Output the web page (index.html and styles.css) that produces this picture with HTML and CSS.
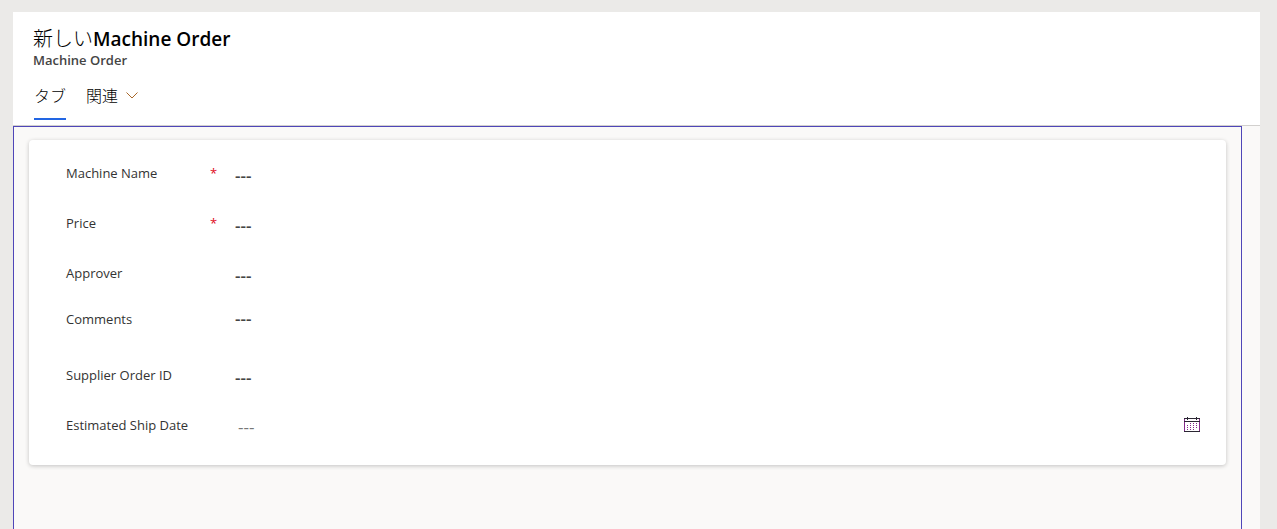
FILE: index.html
```
<!DOCTYPE html>
<html lang="ja">

<head>
    <meta charset="UTF-8">
    <meta name="viewport" content="width=device-width, initial-scale=1.0">
    <title>Machine Order</title>
    <link rel="stylesheet" href="styles.css">
</head>

<body>
    <main class="page">
        <header class="page-header">
            <h1 class="title"><span class="title-new">新しい</span>Machine Order</h1>
            <p class="entity">Machine Order</p>
            <nav class="tabs">
                <button type="button" class="tab active">タブ</button>
                <button type="button" class="tab">関連
                    <svg class="chevron" viewBox="0 0 12 8" width="12" height="8">
                        <path d="M0.5 1.5L6 7L11.5 1.5" />
                    </svg>
                </button>
            </nav>
        </header>

        <div class="frame">
            <form class="card">
                <div class="row">
                    <label for="machine-name">Machine Name</label>
                    <span class="required">*</span>
                    <input type="text" id="machine-name" placeholder="---" required>
                </div>
                <div class="row">
                    <label for="price">Price</label>
                    <span class="required">*</span>
                    <input type="text" id="price" placeholder="---" required>
                </div>
                <div class="row">
                    <label for="approver">Approver</label>
                    <input type="text" id="approver" placeholder="---">
                </div>
                <div class="row comments">
                    <label for="comments">Comments</label>
                    <textarea id="comments" rows="1" placeholder="---"></textarea>
                </div>
                <div class="row">
                    <label for="supplier-order-id">Supplier Order ID</label>
                    <input type="text" id="supplier-order-id" placeholder="---">
                </div>
                <div class="row date">
                    <label for="ship-date">Estimated Ship Date</label>
                    <input type="text" id="ship-date" placeholder="---">
                    <button type="button" class="calendar" aria-label="Estimated Ship Date">
                        <svg viewBox="0 0 16 16" width="16" height="16" shape-rendering="crispEdges">
                            <path class="side" d="M0 2h1v12H0zM15 2h1v12h-1z" />
                            <path class="line" d="M0 1h16v1H0zM0 4h16v1H0zM0 14h16v1H0zM3 0h1v3H3zM12 0h1v3h-1z" />
                            <path class="dots" d="M6 6h1v1H6zM9 6h1v1H9zM12 6h1v1h-1zM3 8h1v1H3zM6 8h1v1H6zM9 8h1v1H9zM12 8h1v1h-1zM3 10h1v1H3zM6 10h1v1H6zM9 10h1v1H9zM12 10h1v1h-1zM3 12h1v1H3zM6 12h1v1H6zM9 12h1v1H9z" />
                        </svg>
                    </button>
                </div>
            </form>
        </div>
    </main>
</body>

</html>
```
FILE: styles.css
```
* {
    box-sizing: border-box;
}

body {
    margin: 0;
    padding: 12px 17px 0 13px;
    min-height: 100vh;
    display: flex;
    flex-direction: column;
    background-color: #ebeae8;
    color: #333;
    font-family: "Segoe UI", "Open Sans", "Noto Sans CJK JP", sans-serif;
    font-size: 13px;
    line-height: 20px;
}

.page {
    flex: 1;
    display: flex;
    flex-direction: column;
    background-color: #faf9f8;
}

.page-header {
    padding: 14px 20px 5px;
    background-color: #fff;
    border-bottom: 1px solid #d2d0ce;
}

.title {
    margin: 0;
    color: #000;
    font-size: 19px;
    font-weight: 600;
    line-height: 26px;
}

.title-new {
    font-size: 20px;
    font-weight: 300;
}

.entity {
    margin: 0;
    color: #444;
    font-size: 13px;
    font-weight: 600;
    line-height: 16px;
}

.tabs {
    display: flex;
    gap: 20px;
    margin-top: 12px;
    padding-left: 1px;
}

.tab {
    display: flex;
    align-items: center;
    gap: 8px;
    height: 40px;
    padding: 0 0 8px;
    border: none;
    border-bottom: 2px solid transparent;
    background: none;
    color: #000;
    font-family: inherit;
    font-size: 16px;
    font-weight: 300;
    cursor: pointer;
}

.tab.active {
    border-bottom-color: #2266e3;
}

.chevron {
    fill: none;
    stroke: #a8682a;
}

.frame {
    flex: 1;
    margin-right: 18px;
    padding: 13px 15px;
    border: 1px solid #4f46b8;
    border-bottom: none;
}

.card {
    padding: 8px 24px 15px 37px;
    background-color: #fff;
    border-radius: 4px;
    box-shadow: 0 1px 4px rgba(0, 0, 0, 0.22);
}

.row {
    display: grid;
    grid-template-columns: 144px 25px 1fr auto;
    align-items: start;
    height: 50px;
    padding-top: 15px;
}

.row.comments {
    height: 52px;
    padding-top: 11px;
}

.required {
    color: #e00b1c;
}

input,
textarea {
    grid-column: 3;
    width: 100%;
    height: 24px;
    padding: 0;
    border: none;
    outline: none;
    resize: none;
    overflow: hidden;
    background: none;
    color: #333;
    font-family: inherit;
    font-size: 17px;
    font-weight: 600;
    line-height: 20px;
}

input::placeholder,
textarea::placeholder {
    color: #444;
    opacity: 1;
}

.date input {
    height: 22px;
    padding-left: 3px;
    font-weight: 400;
}

.date input::placeholder {
    color: #777;
}

.calendar {
    display: flex;
    padding: 2px;
    border: none;
    background: none;
    cursor: pointer;
}

.calendar .line {
    fill: #2b2633;
}

.calendar .side,
.calendar .dots {
    fill: #852a8c;
}
```
